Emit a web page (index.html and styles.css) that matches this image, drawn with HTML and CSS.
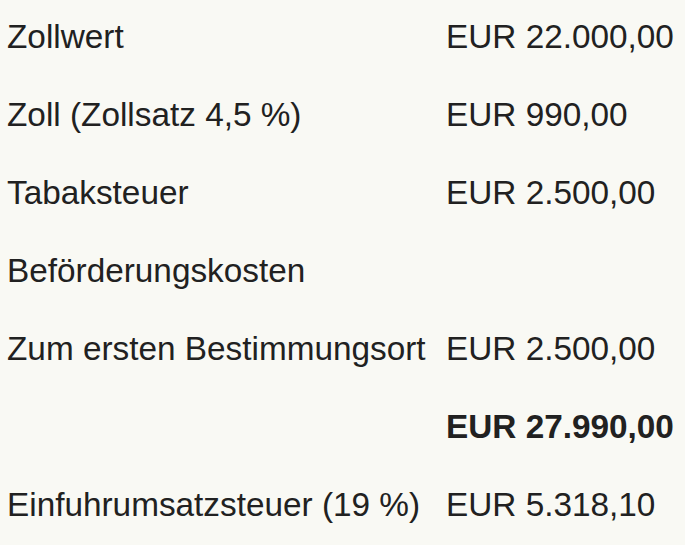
FILE: index.html
```html
<!DOCTYPE html>
<html lang="de">
<head>
<meta charset="utf-8">
<title>Zollberechnung</title>
<link rel="stylesheet" href="styles.css">
</head>
<body>
<div class="sheet">
  <div class="label">Zollwert</div><div class="value">EUR 22.000,00</div>
  <div class="label">Zoll (Zollsatz 4,5 %)</div><div class="value">EUR 990,00</div>
  <div class="label">Tabaksteuer</div><div class="value">EUR 2.500,00</div>
  <div class="label">Beförderungskosten</div><div class="value"></div>
  <div class="label">Zum ersten Bestimmungsort</div><div class="value">EUR 2.500,00</div>
  <div class="label"></div><div class="value total">EUR 27.990,00</div>
  <div class="label">Einfuhrumsatzsteuer (19 %)</div><div class="value">EUR 5.318,10</div>
</div>
</body>
</html>
```
FILE: styles.css
```css
html, body {
  margin: 0;
  padding: 0;
  background: #f9f9f4;
}
body {
  font-family: "Liberation Sans", Arial, sans-serif;
  font-size: 33.33px;
  color: #212121;
}
.sheet {
  display: grid;
  grid-template-columns: 439px auto;
  row-gap: 4px;
  padding: 0 0 0 7px;
}
.label, .value {
  line-height: 74px;
  height: 74px;
  white-space: nowrap;
}
.total {
  font-weight: bold;
}
```
